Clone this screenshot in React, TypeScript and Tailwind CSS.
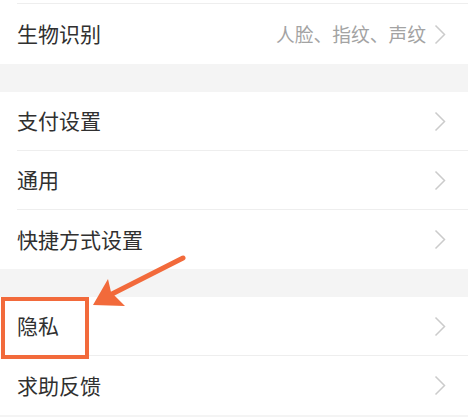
import { ReactNode } from 'react'

const Chevron = () => (
  <svg width="12" height="21" viewBox="0 0 12 21" className="shrink-0">
    <path d="M1.5 1.5 L10.5 10.5 L1.5 19.5" fill="none" stroke="#cbcbcb" strokeWidth="1.5" />
  </svg>
)

const Row = ({ label, value, divider = true }: { label: ReactNode; value?: string; divider?: boolean }) => (
  <div className="bg-white pl-[17px]">
    <div className={`flex h-[59px] items-center pr-[22px] ${divider ? 'border-b border-[#eeeeee]' : ''}`}>
      <span className="flex-1 text-[21px] text-[#303030]">{label}</span>
      {value && <span className="mr-[8px] text-[18.75px] text-[#a3a3a3]">{value}</span>}
      <Chevron />
    </div>
  </div>
)

export default function App() {
  return (
    <div
      className="relative h-[417px] w-[468px] overflow-hidden bg-[#f4f4f4]"
      style={{ fontFamily: '"Noto Sans CJK SC", "Noto Sans", sans-serif' }}
    >
      <div className="h-[4px] bg-white pl-[17px]">
        <div className="h-[4px] border-b border-[#eeeeee]" />
      </div>
      <div className="bg-white">
        <div className="flex h-[60px] items-center pl-[17px] pr-[22px]">
          <span className="flex-1 text-[21px] text-[#303030]">生物识别</span>
          <span className="mr-[8px] text-[18.75px] text-[#a3a3a3]">人脸、指纹、声纹</span>
          <Chevron />
        </div>
      </div>
      <div className="h-[28px]" />
      <Row label="支付设置" />
      <Row label="通用" />
      <Row label="快捷方式设置" divider={false} />
      <div className="h-[28px]" />
      <Row label="隐私" />
      <Row label="求助反馈" divider={false} />

      {/* highlight box + arrow overlay */}
      <div className="absolute left-[1px] top-[297px] h-[62px] w-[88px] border-[4px] border-[#f26a3b]" />
      <svg className="absolute left-0 top-0" width="468" height="417" viewBox="0 0 468 417">
        <line x1="183" y1="258" x2="106" y2="297" stroke="#f26a3b" strokeWidth="5" strokeLinecap="round" />
        <path d="M93 305 L108 279 L111 292 L125 306 Z" fill="#f26a3b" />
      </svg>
    </div>
  )
}
